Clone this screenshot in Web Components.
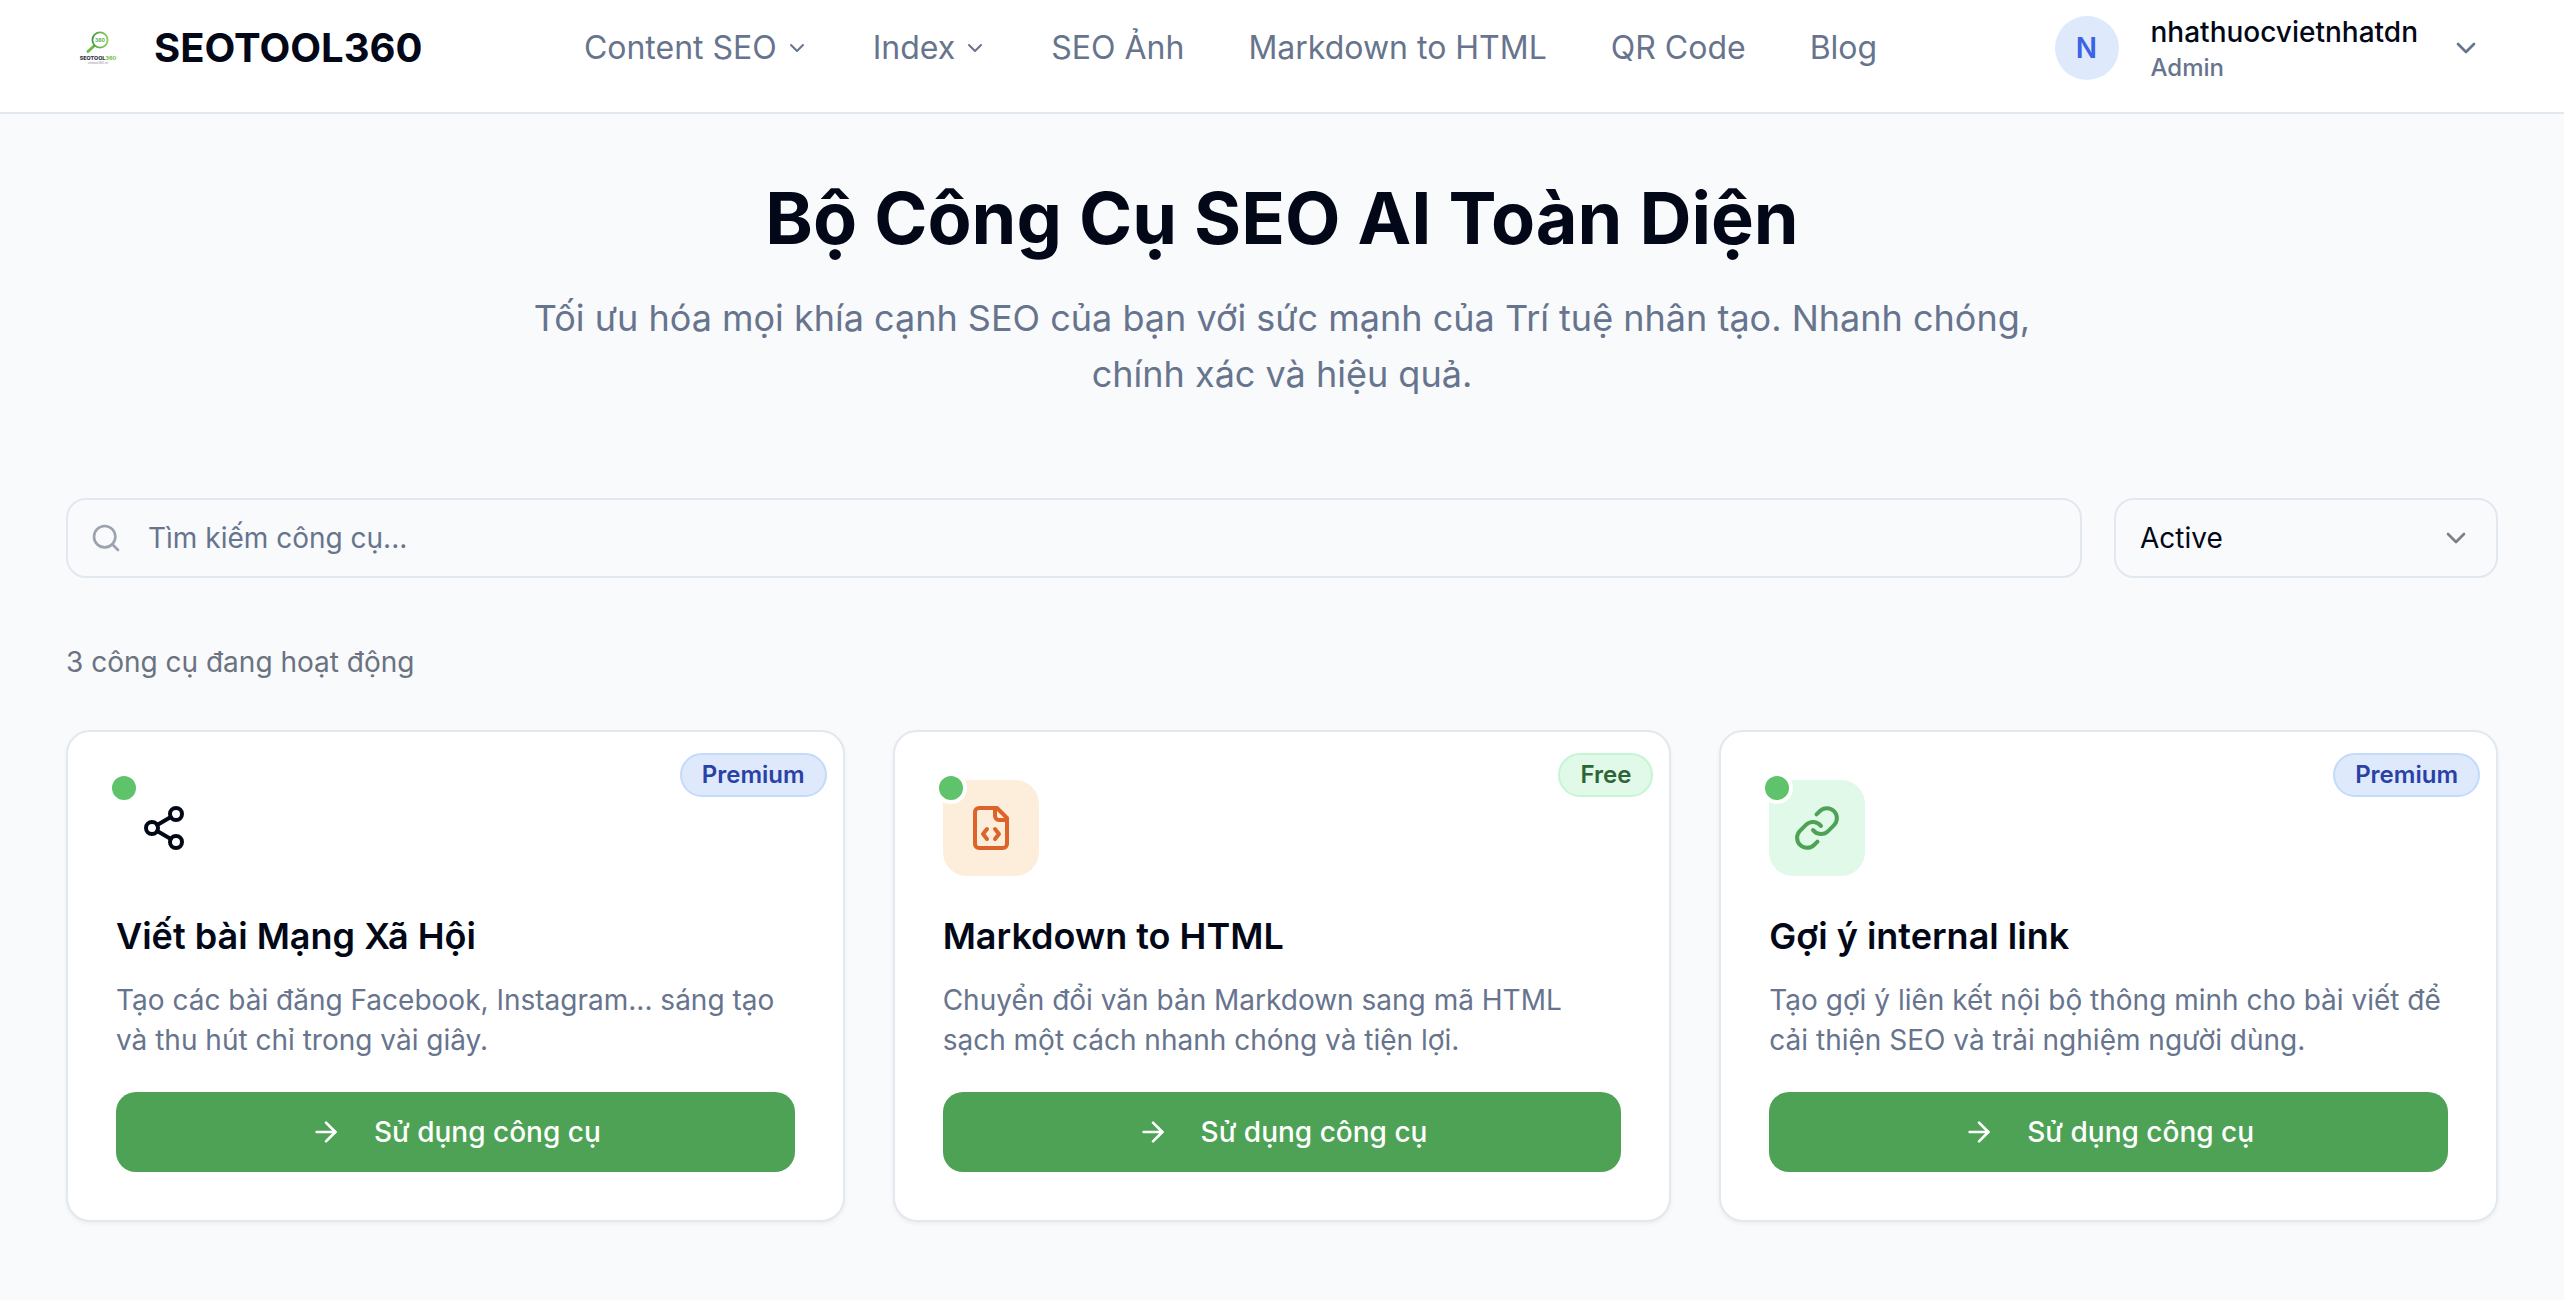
<!DOCTYPE html>
<html lang="vi">
<head>
<meta charset="utf-8">
<meta name="viewport" content="width=device-width, initial-scale=1">
<title>SEOTOOL360</title>
<style>
  :root {
    --ink: #020817;
    --muted: #67748d;
    --line: #e2e8f0;
    --green: #4ea255;
  }
  body {
    margin: 0;
    min-height: 100vh;
    background: #f9fafc;
    color: var(--ink);
    font-family: Inter, "Noto Sans", sans-serif;
    font-size: 28px;
    line-height: 40px;
  }
</style>
</head>
<body>

<site-header>
  <site-brand slot="brand">SEOTOOL360</site-brand>
  <nav-item menu>Content SEO</nav-item>
  <nav-item menu>Index</nav-item>
  <nav-item>SEO Ảnh</nav-item>
  <nav-item>Markdown to HTML</nav-item>
  <nav-item>QR Code</nav-item>
  <nav-item>Blog</nav-item>
  <user-menu slot="user">
    <span slot="initial">N</span>
    <span slot="name">nhathuocvietnhatdn</span>
    <span slot="role">Admin</span>
  </user-menu>
</site-header>

<tools-page>
  <page-hero slot="hero">
    <span slot="title">Bộ Công Cụ SEO AI Toàn Diện</span>
    Tối ưu hóa mọi khía cạnh SEO của bạn với sức mạnh của Trí tuệ nhân tạo. Nhanh chóng, chính xác và hiệu quả.
  </page-hero>
  <tool-filter slot="filter"></tool-filter>
  <span slot="count">3 công cụ đang hoạt động</span>

  <tool-card icon="share" tone="plain">
    <tier-badge slot="badge" tier="premium">Premium</tier-badge>
    <span slot="title">Viết bài Mạng Xã Hội</span>
    Tạo các bài đăng Facebook, Instagram... sáng tạo và thu hút chỉ trong vài giây.
  </tool-card>
  <tool-card icon="file" tone="orange">
    <tier-badge slot="badge" tier="free">Free</tier-badge>
    <span slot="title">Markdown to HTML</span>
    Chuyển đổi văn bản Markdown sang mã HTML sạch một cách nhanh chóng và tiện lợi.
  </tool-card>
  <tool-card icon="link" tone="green">
    <tier-badge slot="badge" tier="premium">Premium</tier-badge>
    <span slot="title">Gợi ý internal link</span>
    Tạo gợi ý liên kết nội bộ thông minh cho bài viết để cải thiện SEO và trải nghiệm người dùng.
  </tool-card>
</tools-page>

<script>
const ICONS = {
  chevron: '<path d="m6 9 6 6 6-6"/>',
  search: '<circle cx="11" cy="11" r="8"/><path d="m21 21-4.3-4.3"/>',
  arrow: '<path d="M5 12h14"/><path d="m12 5 7 7-7 7"/>',
  share: '<circle cx="18" cy="5" r="3"/><circle cx="6" cy="12" r="3"/><circle cx="18" cy="19" r="3"/><path d="m8.59 13.51 6.83 3.98"/><path d="m15.41 6.51-6.82 3.98"/>',
  file: '<path d="M10 12.5 8 15l2 2.5"/><path d="m14 12.5 2 2.5-2 2.5"/><path d="M14 2v4a2 2 0 0 0 2 2h4"/><path d="M15 2H6a2 2 0 0 0-2 2v16a2 2 0 0 0 2 2h12a2 2 0 0 0 2-2V7z"/>',
  link: '<path d="M10 13a5 5 0 0 0 7.54.54l3-3a5 5 0 0 0-7.07-7.07l-1.72 1.71"/><path d="M14 11a5 5 0 0 0-7.54-.54l-3 3a5 5 0 0 0 7.07 7.07l1.71-1.71"/>'
};
const icon = (name, size) =>
  `<svg width="${size}" height="${size}" viewBox="0 0 24 24" fill="none" stroke="currentColor" stroke-width="2" stroke-linecap="round" stroke-linejoin="round" aria-hidden="true">${ICONS[name]}</svg>`;

const RESET = `
  *, *::before, *::after { box-sizing: border-box; }
  button, input, select { font: inherit; color: inherit; margin: 0; background: none; border: 0; }
  button, select { cursor: pointer; }
  a { color: inherit; text-decoration: none; }
  svg { display: block; flex: none; }
  h1, h2, p { margin: 0; }
`;

class BaseElement extends HTMLElement {
  connectedCallback() {
    if (this.shadowRoot) return;
    this.attachShadow({ mode: 'open' }).innerHTML =
      `<style>${RESET}${this.styles()}</style>${this.markup()}`;
  }
}

customElements.define('site-header', class extends BaseElement {
  styles() { return `
    :host { display: block; background: #fff; border-bottom: 2px solid var(--line); }
    header { display: flex; align-items: center; justify-content: space-between; gap: 32px;
      max-width: 2560px; min-height: 112px; margin: 0 auto; padding: 0 64px 16px; }
    nav { display: flex; align-items: center; gap: 64px; }
  `; }
  markup() { return `<header><slot name="brand"></slot><nav><slot></slot></nav><slot name="user"></slot></header>`; }
});

customElements.define('site-brand', class extends BaseElement {
  styles() { return `
    :host { display: block; }
    a { display: flex; align-items: center; gap: 24px; font-size: 40px; line-height: 56px; font-weight: 700; }
  `; }
  markup() { return `<a href="#">
    <svg width="64" height="64" viewBox="0 0 64 64" aria-hidden="true">
      <defs>
        <linearGradient id="ring" x1="0" y1="0" x2="1" y2="0">
          <stop offset="0" stop-color="#3f9a4c"/><stop offset="1" stop-color="#8fcf4f"/>
        </linearGradient>
      </defs>
      <path d="M28 30 22 35.500" stroke="#6dbb4d" stroke-width="3" stroke-linecap="round"/>
      <circle cx="34" cy="24" r="7.600" fill="#fff" stroke="url(#ring)" stroke-width="1.800"/>
      <text x="34" y="26" text-anchor="middle" font-size="5" font-weight="700" fill="#58a862">360</text>
      <text x="32" y="44" text-anchor="middle" font-size="5.400" font-weight="800" fill="#2f3440">SEOTOOL<tspan fill="#7cc653">360</tspan></text>
      <text x="32" y="48" text-anchor="middle" font-size="3" font-weight="400" fill="#8a9098">seotool360.vn</text>
    </svg>
    <slot></slot></a>`; }
});

customElements.define('nav-item', class extends BaseElement {
  styles() { return `
    :host { display: block; color: var(--muted); font-size: 32px; line-height: 48px; white-space: nowrap; }
    a, button { display: flex; align-items: center; gap: 8px; padding: 0; }
  `; }
  markup() {
    return this.hasAttribute('menu')
      ? `<button type="button" aria-haspopup="true"><slot></slot>${icon('chevron', 24)}</button>`
      : `<a href="#"><slot></slot></a>`;
  }
});

customElements.define('user-menu', class extends BaseElement {
  styles() { return `
    :host { display: block; }
    button { display: flex; align-items: center; gap: 32px; padding: 0 16px; text-align: left; }
    .avatar { display: grid; place-items: center; width: 64px; height: 64px; border-radius: 50%;
      background: #dee9fc; color: #3b63e6; font-weight: 600; }
    .who { display: flex; flex-direction: column; font-weight: 500; }
    .role { color: var(--muted); font-size: 24px; line-height: 32px; }
    svg { color: var(--muted); }
  `; }
  markup() { return `<button type="button" aria-haspopup="true">
    <span class="avatar"><slot name="initial"></slot></span>
    <span class="who"><slot name="name"></slot><span class="role"><slot name="role"></slot></span></span>
    ${icon('chevron', 32)}</button>`; }
});

customElements.define('tools-page', class extends BaseElement {
  styles() { return `
    :host { display: block; }
    main { display: flex; flex-direction: column; max-width: 2560px; margin: 0 auto; padding: 64px; box-sizing: border-box; }
    .filter { margin-top: 96px; }
    .count { margin-top: 64px; color: #6b7280; }
    .grid { display: grid; grid-template-columns: repeat(3, minmax(0, 1fr)); gap: 48px; margin-top: 48px; }
  `; }
  markup() { return `<main>
    <slot name="hero"></slot>
    <div class="filter"><slot name="filter"></slot></div>
    <p class="count"><slot name="count"></slot></p>
    <div class="grid"><slot></slot></div>
  </main>`; }
});

customElements.define('page-hero', class extends BaseElement {
  styles() { return `
    :host { display: block; text-align: center; }
    h1 { font-size: 72px; line-height: 80px; font-weight: 700; }
    p { max-width: 1536px; margin: 32px auto 0; color: var(--muted); font-size: 36px; line-height: 56px; }
  `; }
  markup() { return `<h1><slot name="title"></slot></h1><p><slot></slot></p>`; }
});

customElements.define('tool-filter', class extends BaseElement {
  styles() { return `
    :host { display: flex; gap: 32px; }
    label { display: flex; align-items: center; height: 80px; border: 2px solid var(--line); border-radius: 20px; }
    .search { flex: 1; gap: 24px; padding: 0 24px 0 22px; }
    .search svg { color: #9ca3af; }
    input { flex: 1; min-width: 0; height: 100%; padding: 0 2px; outline: 0; }
    input::placeholder { color: var(--muted); opacity: 1; }
    .status { display: grid; width: 384px; }
    .status > * { grid-area: 1 / 1; }
    select { appearance: none; width: 100%; height: 100%; padding: 0 24px; outline: 0; }
    .status svg { justify-self: end; margin-right: 24px; opacity: .5; pointer-events: none; }
  `; }
  markup() { return `
    <label class="search">${icon('search', 32)}
      <input type="search" placeholder="Tìm kiếm công cụ..." aria-label="Tìm kiếm công cụ"></label>
    <label class="status">
      <select aria-label="Trạng thái"><option selected>Active</option></select>${icon('chevron', 32)}</label>`; }
});

customElements.define('tier-badge', class extends BaseElement {
  styles() { return `
    :host { display: block; padding: 4px 20px; border: 2px solid; border-radius: 22px;
      font-size: 24px; line-height: 32px; font-weight: 600; }
    :host([tier="premium"]) { background: #dee9fc; border-color: #c3dafb; color: #2a41a5; }
    :host([tier="free"]) { background: #e1f9e8; border-color: #c5f5d3; color: #2c6537; }
  `; }
  markup() { return `<slot></slot>`; }
});

customElements.define('tool-card', class extends BaseElement {
  styles() { return `
    :host { display: block; }
    article { position: relative; display: flex; flex-direction: column; height: 100%; padding: 48px;
      background: #fff; border: 2px solid var(--line); border-radius: 24px; box-shadow: 0 2px 4px rgb(0 0 0 / .05); }
    .badge { position: absolute; top: 21px; right: 16px; }
    .icon { position: relative; display: grid; place-items: center; width: 96px; height: 96px; border-radius: 24px; }
    .dot { position: absolute; top: -8px; left: -8px; width: 32px; height: 32px;
      background: #5fc36c; border: 4px solid #fff; border-radius: 50%; }
    .orange { background: #fdeedb; color: #dc6329; }
    .green { background: #e1f9e8; color: var(--green); }
    h2 { margin-top: 32px; font-size: 36px; line-height: 56px; font-weight: 600; }
    p { flex: 1; margin: 16px 0 32px; color: var(--muted); }
    button { display: flex; align-items: center; justify-content: center; gap: 32px; height: 80px;
      border-radius: 20px; background: var(--green); color: #fff; font-weight: 500; }
  `; }
  markup() { return `<article>
    <div class="badge"><slot name="badge"></slot></div>
    <div class="icon ${this.getAttribute('tone')}">${icon(this.getAttribute('icon'), 48)}<span class="dot"></span></div>
    <h2><slot name="title"></slot></h2>
    <p><slot></slot></p>
    <button type="button">${icon('arrow', 32)}<span>Sử dụng công cụ</span></button>
  </article>`; }
});
</script>
</body>
</html>
